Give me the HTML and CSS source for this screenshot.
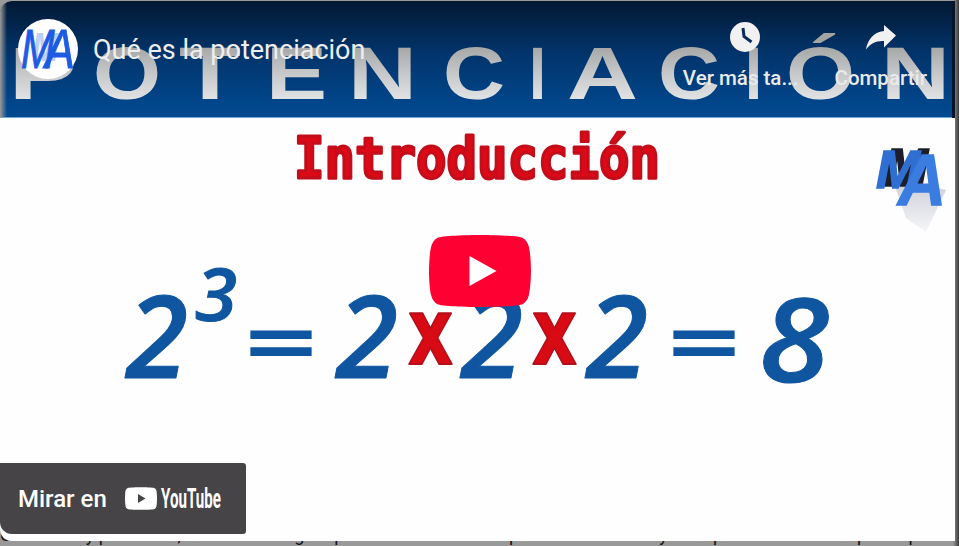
FILE: index.html

```html
<!DOCTYPE html>
<html lang="es">
<head>
  <meta charset="UTF-8">
  <title>Qué es la potenciación</title>
  <link rel="stylesheet" href="styles.css">
</head>
<body>
  <div class="player">
    <svg class="thumb" viewBox="0 1 955 540" width="955" height="540">
      <defs>
        <linearGradient id="sky" x1="0" y1="0" x2="0" y2="1">
          <stop offset="0" stop-color="#021833"/>
          <stop offset="0.45" stop-color="#02346b"/>
          <stop offset="1" stop-color="#014a92"/>
        </linearGradient>
        <linearGradient id="steel" gradientUnits="userSpaceOnUse" x1="0" y1="44" x2="0" y2="100">
          <stop offset="0" stop-color="#a3a3a3"/>
          <stop offset="0.5" stop-color="#c4c6c8"/>
          <stop offset="1" stop-color="#e2e3e4"/>
        </linearGradient>
        <linearGradient id="edge" x1="0" y1="0" x2="1" y2="0">
          <stop offset="0" stop-color="#9a9a9a"/>
          <stop offset="1" stop-color="#9a9a9a" stop-opacity="0"/>
        </linearGradient>
        <linearGradient id="mirror" x1="0" y1="0" x2="0" y2="1">
          <stop offset="0" stop-color="#c9ccd6"/>
          <stop offset="1" stop-color="#f6f6f8"/>
        </linearGradient>
      </defs>

      <rect x="0" y="1" width="955" height="540" fill="#fefefe"/>

      <!-- banner -->
      <rect x="0" y="1" width="955" height="116" fill="url(#sky)"/>
      <rect x="0" y="117" width="955" height="1" fill="#6fa9d8"/>
      <g class="banner-text" fill="url(#steel)">
        <text x="9" y="99" textLength="68" lengthAdjust="spacingAndGlyphs">P</text>
        <text x="93" y="99" textLength="68" lengthAdjust="spacingAndGlyphs">O</text>
        <text x="179" y="99" textLength="62" lengthAdjust="spacingAndGlyphs">T</text>
        <text x="266" y="99" textLength="61" lengthAdjust="spacingAndGlyphs">E</text>
        <text x="348" y="99" textLength="69" lengthAdjust="spacingAndGlyphs">N</text>
        <text x="443" y="99" textLength="62" lengthAdjust="spacingAndGlyphs">C</text>
        <text x="529" y="99" textLength="17" lengthAdjust="spacingAndGlyphs">I</text>
        <text x="567" y="99" textLength="71" lengthAdjust="spacingAndGlyphs">A</text>
        <text x="658" y="99" textLength="62" lengthAdjust="spacingAndGlyphs">C</text>
        <text x="745" y="99" textLength="17" lengthAdjust="spacingAndGlyphs">I</text>
        <text x="786" y="99" textLength="69" lengthAdjust="spacingAndGlyphs">Ó</text>
        <text x="881" y="99" textLength="69" lengthAdjust="spacingAndGlyphs">N</text>
      </g>
      <rect x="0" y="1" width="7" height="117" fill="url(#edge)"/>
      <rect x="952" y="1" width="3" height="117" fill="#06142a"/>

      <!-- slide -->
      <text class="slide-title" x="294" y="178" textLength="366" lengthAdjust="spacingAndGlyphs">Introducción</text>

      <g class="math">
        <text x="126" y="378" textLength="62" lengthAdjust="spacingAndGlyphs">2</text>
        <text class="math-exp" x="195" y="321" textLength="42" lengthAdjust="spacingAndGlyphs">3</text>
        <text class="math-eq" x="240" y="367" textLength="82" lengthAdjust="spacingAndGlyphs">=</text>
        <text x="336" y="378" textLength="62" lengthAdjust="spacingAndGlyphs">2</text>
        <text class="math-times" x="408" y="364" textLength="45" lengthAdjust="spacingAndGlyphs">x</text>
        <text x="461" y="378" textLength="62" lengthAdjust="spacingAndGlyphs">2</text>
        <text class="math-times" x="532" y="364" textLength="45" lengthAdjust="spacingAndGlyphs">x</text>
        <text x="586" y="378" textLength="62" lengthAdjust="spacingAndGlyphs">2</text>
        <text class="math-eq" x="663" y="367" textLength="82" lengthAdjust="spacingAndGlyphs">=</text>
        <text class="math-result" x="759" y="382" textLength="70" lengthAdjust="spacingAndGlyphs">8</text>
      </g>

      <!-- logo on the slide -->
      <polygon points="892,178 946,190 926,232 906,218" fill="url(#mirror)"/>
      <text class="slide-logo slide-logo-back" x="884" y="186" textLength="44" lengthAdjust="spacingAndGlyphs">M</text>
      <text class="slide-logo" x="876" y="188" textLength="44" lengthAdjust="spacingAndGlyphs">M</text>
      <text class="slide-logo slide-logo-a" x="898" y="205" textLength="48" lengthAdjust="spacingAndGlyphs">A</text>
    </svg>

    <div class="top-bar">
      <svg class="avatar" viewBox="0 0 60 60" width="60" height="60">
        <circle cx="30" cy="30" r="30" fill="#fff"/>
        <text class="avatar-shade" transform="translate(14 42) scale(0.8 1)">M</text>
        <text class="avatar-mark" transform="translate(3 49) scale(0.72 1)">M</text>
        <text class="avatar-mark" transform="translate(27 49) scale(0.8 1)">A</text>
      </svg>
      <div class="video-title">Qué es la potenciación</div>
      <div class="actions">
        <div class="action">
          <svg class="action-icon action-clock" viewBox="727 22 30 30" width="30" height="30">
            <circle cx="742" cy="37" r="15" fill="#f1f1f1"/>
            <polyline points="740,28 741,36.5 748.5,42" fill="none" stroke="#0b2c5c" stroke-width="3"/>
          </svg>
          <span>Ver más ta...</span>
        </div>
        <div class="action">
          <svg class="action-icon" viewBox="865 22 30 30" width="30" height="30">
            <path d="M883,25 L895,35.5 L883,47.6 L883,41 C875,40.5 869,44 865,49.5 C866,41 872,32 883,31 Z" fill="#f1f1f1"/>
          </svg>
          <span>Compartir</span>
        </div>
      </div>
    </div>

    <svg class="play" viewBox="0 0 68 48" width="102" height="72">
      <path d="M66.52,7.74c-0.78-2.93-2.49-5.41-5.42-6.19C55.79,.13,34,0,34,0S12.21,.13,6.9,1.55C3.97,2.33,2.27,4.81,1.48,7.74C0.06,13.05,0,24,0,24s0.06,10.95,1.48,16.26c0.78,2.93,2.49,5.41,5.42,6.19C12.21,47.87,34,48,34,48s21.79-0.13,27.1-1.55c2.93-0.78,4.64-3.26,5.42-6.19C67.94,34.95,68,24,68,24S67.94,13.05,66.52,7.74z" fill="#ff0033"/>
      <path d="M45,24 27,14 27,34" fill="#fff"/>
    </svg>

    <div class="watch-on">
      <span>Mirar en</span>
      <svg class="yt-logo" viewBox="0 0 101 23" width="101" height="23">
        <path d="M31.4,3.6c-0.4-1.4-1.4-2.4-2.8-2.8C26.1,0.2,16,0.2,16,0.2S5.9,0.2,3.4,0.8C2,1.2,1,2.2,0.6,3.6C0,6.1,0,11.5,0,11.5s0,5.4,0.6,7.9c0.4,1.4,1.4,2.4,2.8,2.8c2.5,0.6,12.6,0.6,12.6,0.6s10.1,0,12.6-0.6c1.4-0.4,2.4-1.4,2.8-2.8c0.6-2.5,0.6-7.9,0.6-7.9S32,6.1,31.4,3.6z" fill="#fff"/>
        <path d="M13,16 20.5,11.5 13,7z" fill="#464446"/>
        <text class="yt-word" transform="translate(36 21) scale(0.56 1)">YouTube</text>
      </svg>
    </div>
  </div>

  <p class="under-text">Cuando hay potencias, tenemos una gran parte de la base en el producto de tres o y todo para el resultado que se pide</p>
</body>
</html>
```

FILE: styles.css

```css
html, body { margin: 0; height: 100%; overflow: hidden; }
body {
  background: linear-gradient(to right, #999 953px, #3a3a3a 959px);
  font-family: Roboto, "Liberation Sans", sans-serif;
  padding-top: 1px;
  box-sizing: border-box;
}

.player {
  position: relative;
  z-index: 1;
  width: 955px;
  height: 540px;
  border-radius: 12px 0 0 12px;
  overflow: hidden;
}
.thumb { display: block; }

.banner-text text {
  font-family: "Liberation Sans", sans-serif;
  font-weight: bold;
  font-size: 74px;
}

.slide-title {
  font-family: "DejaVu Sans Mono", monospace;
  font-weight: bold;
  font-size: 57px;
  fill: #dc0a16;
  stroke: #c20d1a;
  stroke-width: 3px;
  stroke-linejoin: round;
}

.math text {
  font-family: "Open Sans", sans-serif;
  font-weight: 600;
  font-style: italic;
  font-size: 114px;
  fill: #0f559f;
  stroke: #0f559f;
  stroke-width: 1px;
  stroke-linejoin: round;
}
.math .math-exp { font-size: 72px; }
.math .math-result { font-size: 116px; }
.math .math-eq {
  font-family: "DejaVu Sans", sans-serif;
  font-style: normal;
  font-weight: bold;
  font-size: 75px;
  stroke-width: 0;
}
.math .math-times {
  font-family: "DejaVu Sans", sans-serif;
  font-style: normal;
  font-weight: bold;
  font-size: 92px;
  fill: #d80a14;
  stroke: #b30f1c;
  stroke-width: 2px;
}

.slide-logo {
  font-family: "Liberation Sans", sans-serif;
  font-weight: bold;
  font-style: italic;
  font-size: 54px;
  fill: #2f6fd2;
  stroke: #2f6fd2;
  stroke-width: 1.5px;
}
.slide-logo-back { fill: #1c1f2a; stroke: #1c1f2a; }
.slide-logo-a { fill: #3a7ce0; stroke: #3a7ce0; font-size: 72px; }

.top-bar {
  position: absolute;
  top: 18px;
  left: 18px;
  right: 28px;
  display: flex;
  align-items: flex-start;
}
.avatar { flex: none; overflow: visible; }
.video-title {
  margin: 15px 0 0 15px;
  color: #eee;
  font-size: 27px;
  line-height: 32px;
  white-space: nowrap;
}
.avatar-mark {
  font-family: "Liberation Sans", sans-serif;
  font-style: italic;
  font-size: 56px;
  fill: #1d5be3;
  stroke: #1d5be3;
  stroke-width: 1px;
}
.avatar-shade {
  font-family: "Liberation Sans", sans-serif;
  font-style: italic;
  font-weight: bold;
  font-size: 40px;
  fill: #bcd0f2;
}

.actions {
  margin: 3px 0 0 auto;
  display: flex;
  gap: 36px;
}
.action {
  display: flex;
  flex-direction: column;
  align-items: center;
  gap: 13px;
  color: #eaeaea;
  font-size: 20.5px;
  font-weight: 500;
  line-height: 26px;
  white-space: nowrap;
}
.action-icon { display: block; }
.action-clock { margin-left: 8px; }

.play {
  position: absolute;
  left: 429px;
  top: 234px;
}

.watch-on {
  position: absolute;
  left: 0;
  bottom: 7px;
  width: 228px;
  height: 71px;
  padding-left: 18px;
  display: flex;
  align-items: center;
  gap: 18px;
  background: #464446;
  border-radius: 0 3px 3px 12px;
  color: #fff;
  font-size: 24px;
  font-weight: 500;
}
.yt-logo { display: block; flex: none; overflow: visible; }
.yt-word {
  font-family: Roboto, sans-serif;
  font-weight: 700;
  font-size: 27px;
  fill: #fff;
}

.under-text {
  margin: -16px 0 0;
  font-size: 18px;
  line-height: 20px;
  color: #111;
  white-space: nowrap;
}
```
